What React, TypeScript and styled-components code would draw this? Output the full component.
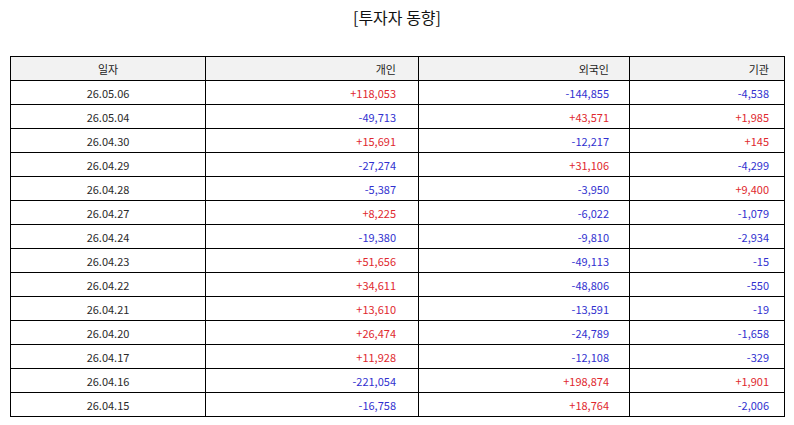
import React from 'react';
import styled, { createGlobalStyle } from 'styled-components';

const GlobalStyle = createGlobalStyle`
  html, body {
    margin: 0;
    padding: 0;
    background: #ffffff;
    font-family: "Noto Sans CJK KR", "Noto Sans", sans-serif;
  }
`;

const Page = styled.div`
  width: 794px;
  padding: 0 10px;
  box-sizing: border-box;
`;

const Title = styled.h1`
  margin: 0;
  height: 56px;
  padding-top: 5px;
  box-sizing: border-box;
  text-align: center;
  font-size: 16px;
  font-weight: 400;
  line-height: 24px;
  color: #111;
`;

const Table = styled.table`
  width: 774px;
  border-collapse: collapse;
  table-layout: fixed;
  font-size: 11px;
`;

const HeadCell = styled.th<{ $align: 'center' | 'right'; $pad: number }>`
  height: 24px;
  padding: 0 ${p => p.$pad}px 0 0;
  border: 1.5px solid #000;
  background: #f2f2f2;
  font-weight: 400;
  color: #222;
  text-align: ${p => p.$align};
  box-sizing: border-box;
`;

const Cell = styled.td<{ $align: 'center' | 'right'; $pad: number; $tone?: 'up' | 'down' }>`
  height: 24px;
  padding: 0 ${p => p.$pad}px 0 0;
  border: 1.5px solid #000;
  text-align: ${p => p.$align};
  color: ${p => (p.$tone === 'up' ? '#e0282e' : p.$tone === 'down' ? '#3131cf' : '#2a2a2a')};
  box-sizing: border-box;
`;

const columns = [
  { label: '일자', width: 195, align: 'center' as const, pad: 0 },
  { label: '개인', width: 213, align: 'right' as const, pad: 22 },
  { label: '외국인', width: 211, align: 'right' as const, pad: 20 },
  { label: '기관', width: 155, align: 'right' as const, pad: 15 },
];

const rows: [string, string, string, string][] = [
  ['26.05.06', '+118,053', '-144,855', '-4,538'],
  ['26.05.04', '-49,713', '+43,571', '+1,985'],
  ['26.04.30', '+15,691', '-12,217', '+145'],
  ['26.04.29', '-27,274', '+31,106', '-4,299'],
  ['26.04.28', '-5,387', '-3,950', '+9,400'],
  ['26.04.27', '+8,225', '-6,022', '-1,079'],
  ['26.04.24', '-19,380', '-9,810', '-2,934'],
  ['26.04.23', '+51,656', '-49,113', '-15'],
  ['26.04.22', '+34,611', '-48,806', '-550'],
  ['26.04.21', '+13,610', '-13,591', '-19'],
  ['26.04.20', '+26,474', '-24,789', '-1,658'],
  ['26.04.17', '+11,928', '-12,108', '-329'],
  ['26.04.16', '-221,054', '+198,874', '+1,901'],
  ['26.04.15', '-16,758', '+18,764', '-2,006'],
];

const toneOf = (v: string) => (v.startsWith('+') ? 'up' : 'down');

export default function App() {
  return (
    <>
      <GlobalStyle />
      <Page>
        <Title>[투자자 동향]</Title>
        <Table>
          <colgroup>
            {columns.map(c => (
              <col key={c.label} style={{ width: c.width }} />
            ))}
          </colgroup>
          <thead>
            <tr>
              {columns.map(c => (
                <HeadCell key={c.label} $align={c.align} $pad={c.pad}>
                  {c.label}
                </HeadCell>
              ))}
            </tr>
          </thead>
          <tbody>
            {rows.map(r => (
              <tr key={r[0]}>
                <Cell $align="center" $pad={0}>{r[0]}</Cell>
                {r.slice(1).map((v, i) => (
                  <Cell key={i} $align="right" $pad={columns[i + 1].pad} $tone={toneOf(v)}>
                    {v}
                  </Cell>
                ))}
              </tr>
            ))}
          </tbody>
        </Table>
      </Page>
    </>
  );
}
